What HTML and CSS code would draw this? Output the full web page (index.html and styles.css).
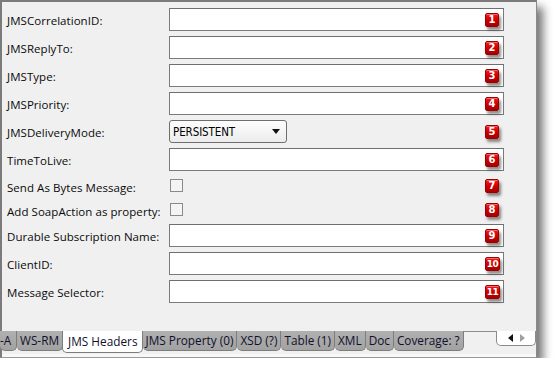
FILE: index.html
```html
<!DOCTYPE html>
<html>
<head>
<meta charset="utf-8">
<link rel="stylesheet" href="styles.css">
</head>
<body>
<div class="panel">
  <div class="form">
    <div class="label">JMSCorrelationID:</div>
    <div class="field"><div class="input"></div><span class="badge">1</span></div>
    <div class="label">JMSReplyTo:</div>
    <div class="field"><div class="input"></div><span class="badge">2</span></div>
    <div class="label">JMSType:</div>
    <div class="field"><div class="input"></div><span class="badge">3</span></div>
    <div class="label">JMSPriority:</div>
    <div class="field"><div class="input"></div><span class="badge">4</span></div>
    <div class="label">JMSDeliveryMode:</div>
    <div class="field"><div class="select"><span class="sel-text">PERSISTENT</span><span class="caret"></span></div><span class="badge">5</span></div>
    <div class="label">TimeToLive:</div>
    <div class="field"><div class="input"></div><span class="badge">6</span></div>
    <div class="label short">Send As Bytes Message:</div>
    <div class="field short"><div class="check"></div><span class="badge">7</span></div>
    <div class="label short">Add SoapAction as property:</div>
    <div class="field short"><div class="check"></div><span class="badge">8</span></div>
    <div class="label">Durable Subscription Name:</div>
    <div class="field"><div class="input"></div><span class="badge">9</span></div>
    <div class="label">ClientID:</div>
    <div class="field"><div class="input"></div><span class="badge wide">10</span></div>
    <div class="label">Message Selector:</div>
    <div class="field"><div class="input"></div><span class="badge wide">11</span></div>
  </div>
  <div class="tabbar">
    <div class="tabs">
      <div class="tab first">-A</div>
      <div class="tab">WS-RM</div>
      <div class="tab active">JMS Headers</div>
      <div class="tab">JMS Property (0)</div>
      <div class="tab">XSD (?)</div>
      <div class="tab">Table (1)</div>
      <div class="tab">XML</div>
      <div class="tab">Doc</div>
      <div class="tab">Coverage: ?</div>
    </div>
    <div class="scroller"><span class="arr left"></span><span class="arr right"></span></div>
  </div>
  <div class="bottom"></div>
</div>
</body>
</html>
```
FILE: styles.css
```css
html, body {
  margin: 0;
  padding: 0;
  background: #ffffff;
}
body {
  font-family: "Open Sans", "Noto Sans", sans-serif;
  font-size: 11.5px;
  color: #0a0a0a;
}
.panel {
  width: 534px;
  height: 355px;
  border-top: 2px solid #7b7b7b;
  border-left: 2px solid #7b7b7b;
  border-right: 1px solid #8a8a8a;
  border-bottom: 1px solid #9a9a9a;
  background: #f0f0f0;
  box-shadow: 6px 7px 9px rgba(0,0,0,0.55);
  display: flex;
  flex-direction: column;
  box-sizing: content-box;
}
.form {
  flex: 1;
  display: grid;
  grid-template-columns: 162px 335px;
  grid-template-rows: 23px 23px 23px 23px 23px 23px 19px 19px 23px 23px 23px;
  row-gap: 5px;
  padding: 6px 0 0 5px;
  align-content: start;
}
.label {
  display: flex;
  align-items: center;
  white-space: nowrap;
  padding-top: 1px;
  letter-spacing: 0.05px;
}
.label.short {
  padding-top: 4px;
}
.field {
  position: relative;
  display: flex;
  align-items: center;
}
.input {
  width: 100%;
  height: 100%;
  box-sizing: border-box;
  background: #ffffff;
  border: 1px solid #7a7a7a;
  border-top-color: #6f6f6f;
}
.select {
  width: 118px;
  height: 100%;
  box-sizing: border-box;
  border: 1px solid #6e6e6e;
  border-radius: 3px;
  background: linear-gradient(#fdfdfd, #ececec);
  display: flex;
  align-items: center;
  justify-content: space-between;
  padding: 0 6px 0 3px;
}
.sel-text {
  font-family: "DejaVu Sans Condensed", "DejaVu Sans", sans-serif;
  font-size: 11.5px;
  color: #000;
  letter-spacing: -0.1px;
}
.caret {
  width: 0;
  height: 0;
  border-left: 4px solid transparent;
  border-right: 4px solid transparent;
  border-top: 5px solid #111;
}
.check {
  width: 13px;
  height: 13px;
  box-sizing: border-box;
  border: 1px solid #8a8a8a;
  background: #f4f4f4;
  margin-left: 1px;
}
.badge {
  position: absolute;
  right: 5px;
  top: 50%;
  margin-top: -7px;
  width: 14px;
  height: 14px;
  box-sizing: border-box;
  border-radius: 2px;
  background: linear-gradient(#f01a1a, #c80000 55%, #a80000);
  border: 1px solid #9c0000;
  box-shadow: 2px 3px 3px rgba(0,0,0,0.45), inset 0 1px 0 rgba(255,140,140,0.7);
  color: #ffffff;
  font-family: "DejaVu Sans", sans-serif;
  font-weight: bold;
  font-size: 10px;
  line-height: 12px;
  text-align: center;
}
.badge.wide {
  width: 15px;
  right: 4px;
  font-size: 9px;
  letter-spacing: -0.6px;
}
.tabbar {
  height: 22px;
  border-top: 1px solid #8c8c8c;
  display: flex;
  justify-content: space-between;
  align-items: flex-start;
  margin-left: -2px;
}
.tabs {
  display: flex;
  align-items: flex-start;
  margin-top: -1px;
}
.tab {
  height: 20px;
  box-sizing: border-box;
  padding: 0 3px;
  background: linear-gradient(#b0b0b0, #a2a2a2);
  border: 1px solid #7d7d7d;
  border-top: none;
  border-left: none;
  border-radius: 0 0 5px 5px;
  font-size: 11.8px;
  line-height: 18px;
  color: #10102a;
  white-space: nowrap;
}
.tab.first {
  padding-left: 0;
  width: 17px;
}
.tab.active {
  background: #ffffff;
  height: 22px;
  padding: 1px 4px 0 5px;
  border-left: 1px solid #7d7d7d;
  margin-left: -1px;
}
.scroller {
  width: 40px;
  height: 15px;
  box-sizing: border-box;
  background: #ffffff;
  border: 1px solid #8a8a8a;
  border-top: none;
  border-radius: 0 0 5px 5px;
  margin-top: -1px;
  margin-right: 0;
  display: flex;
  align-items: center;
  justify-content: center;
  gap: 7px;
}
.arr {
  width: 0;
  height: 0;
  border-top: 4px solid transparent;
  border-bottom: 4px solid transparent;
}
.arr.left {
  border-right: 5px solid #111;
}
.arr.right {
  border-left: 5px solid #a0a0a0;
}
.bottom {
  height: 3px;
  background: #f7f7f7;
}
```
